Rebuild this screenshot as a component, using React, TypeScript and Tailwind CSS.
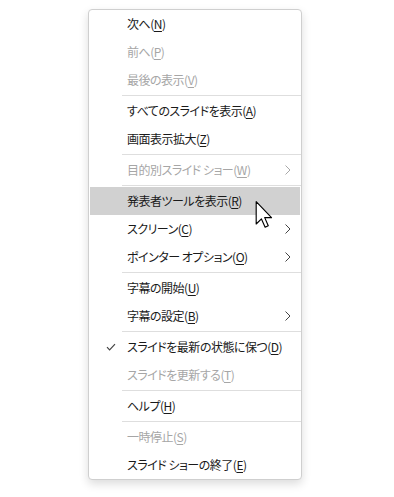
import React from 'react';

type Item =
  | { type: 'sep' }
  | { type: 'item'; label: string; key: string; disabled?: boolean; sub?: boolean; active?: boolean; checked?: boolean };

const items: Item[] = [
  { type: 'item', label: '次へ', key: 'N' },
  { type: 'item', label: '前へ', key: 'P', disabled: true },
  { type: 'item', label: '最後の表示', key: 'V', disabled: true },
  { type: 'sep' },
  { type: 'item', label: 'すべてのスライドを表示', key: 'A' },
  { type: 'item', label: '画面表示拡大', key: 'Z' },
  { type: 'sep' },
  { type: 'item', label: '目的別スライド ショー', key: 'W', disabled: true, sub: true },
  { type: 'sep' },
  { type: 'item', label: '発表者ツールを表示', key: 'R', active: true },
  { type: 'item', label: 'スクリーン', key: 'C', sub: true },
  { type: 'item', label: 'ポインター オプション', key: 'O', sub: true },
  { type: 'sep' },
  { type: 'item', label: '字幕の開始', key: 'U' },
  { type: 'item', label: '字幕の設定', key: 'B', sub: true },
  { type: 'sep' },
  { type: 'item', label: 'スライドを最新の状態に保つ', key: 'D', checked: true },
  { type: 'item', label: 'スライドを更新する', key: 'T', disabled: true },
  { type: 'sep' },
  { type: 'item', label: 'ヘルプ', key: 'H' },
  { type: 'sep' },
  { type: 'item', label: '一時停止', key: 'S', disabled: true },
  { type: 'item', label: 'スライド ショーの終了', key: 'E' },
];

function Chevron({ disabled }: { disabled?: boolean }) {
  return (
    <svg width="6" height="10" viewBox="0 0 6 10" className={disabled ? 'text-[#a8a8a8]' : 'text-[#444]'}>
      <polyline points="0.5,0.5 5,5 0.5,9.5" fill="none" stroke="currentColor" strokeWidth="1" />
    </svg>
  );
}

function Check() {
  return (
    <svg width="10" height="8" viewBox="0 0 10 8" className="text-[#444]">
      <polyline points="1,4.2 3.6,6.8 9,1.2" fill="none" stroke="currentColor" strokeWidth="1.2" />
    </svg>
  );
}

function Cursor() {
  return (
    <svg width="18" height="27" viewBox="0 0 12 19" className="absolute left-[255px] top-[201px]">
      <path
        d="M0.5 0.5 L0.5 16.2 L4.2 12.6 L6.8 18.4 L9 17.4 L6.5 11.7 L11.3 11.7 Z"
        fill="#fff"
        stroke="#000"
        strokeWidth="0.8"
        strokeLinejoin="round"
      />
    </svg>
  );
}

export default function App() {
  return (
    <div className="relative w-[394px] h-[497px] bg-white font-['Noto_Sans_CJK_JP',sans-serif] [font-feature-settings:'palt']">
      <div className="pt-[9px] pl-[88px]">
        <div className="w-[214px] bg-white border border-[#cfcfcf] rounded-[4px] shadow-[0_4px_10px_rgba(0,0,0,0.14)]">
          {items.map((it, i) =>
            it.type === 'sep' ? (
              <div key={i} className="my-[1px] h-px ml-[33px] bg-[#dedede]" />
            ) : (
              <div
                key={i}
                className={`h-[28px] mx-[1px] flex items-center text-[12px] ${
                  it.active ? 'bg-[#d1d1d1]' : ''
                } ${it.disabled ? 'text-[#a6a6a6]' : 'text-[#1a1a1a]'}`}
              >
                <div className="w-[37px] flex justify-center pl-[5px] shrink-0">{it.checked && <Check />}</div>
                <span className="flex-1 whitespace-nowrap tracking-[-0.5px]">
                  {it.label}(<span className="underline underline-offset-[2px]">{it.key}</span>)
                </span>
                <div className="w-[15px] flex justify-start">{it.sub && <Chevron disabled={it.disabled} />}</div>
              </div>
            )
          )}
        </div>
      </div>
      <Cursor />
    </div>
  );
}
